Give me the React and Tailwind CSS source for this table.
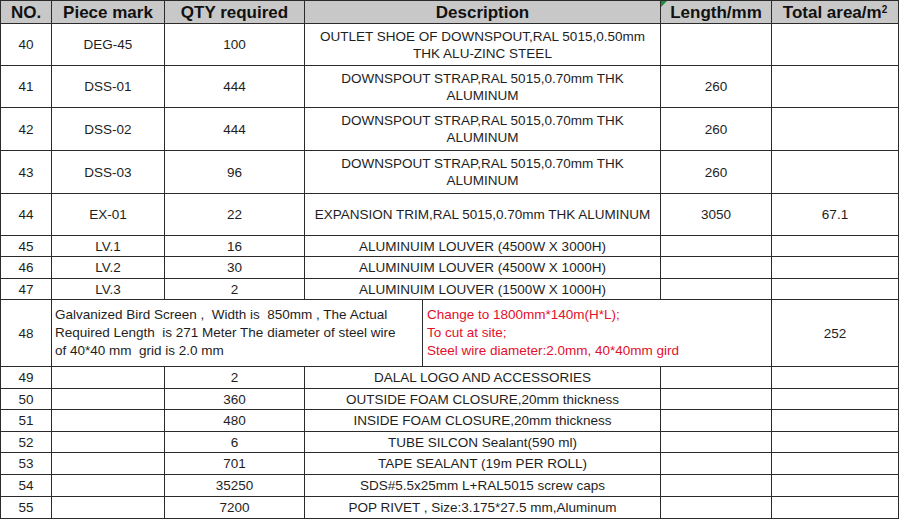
import React from "react";

const rows = [
  { no: "40", mark: "DEG-45", qty: "100", desc: ["OUTLET SHOE OF DOWNSPOUT,RAL 5015,0.50mm", "THK ALU-ZINC STEEL"], len: "", area: "", h: "h-[42px]" },
  { no: "41", mark: "DSS-01", qty: "444", desc: ["DOWNSPOUT STRAP,RAL 5015,0.70mm THK", "ALUMINUM"], len: "260", area: "", h: "h-[42px]" },
  { no: "42", mark: "DSS-02", qty: "444", desc: ["DOWNSPOUT STRAP,RAL 5015,0.70mm THK", "ALUMINUM"], len: "260", area: "", h: "h-[43px]" },
  { no: "43", mark: "DSS-03", qty: "96", desc: ["DOWNSPOUT STRAP,RAL 5015,0.70mm THK", "ALUMINUM"], len: "260", area: "", h: "h-[43px]" },
  { no: "44", mark: "EX-01", qty: "22", desc: ["EXPANSION TRIM,RAL 5015,0.70mm THK ALUMINUM"], len: "3050", area: "67.1", h: "h-[42px]" },
  { no: "45", mark: "LV.1", qty: "16", desc: ["ALUMINUIM LOUVER (4500W X 3000H)"], len: "", area: "", h: "h-[21px]" },
  { no: "46", mark: "LV.2", qty: "30", desc: ["ALUMINUIM LOUVER (4500W X 1000H)"], len: "", area: "", h: "h-[22px]" },
  { no: "47", mark: "LV.3", qty: "2", desc: ["ALUMINUIM LOUVER (1500W X 1000H)"], len: "", area: "", h: "h-[21px]" },
];

const tail = [
  { no: "49", qty: "2", desc: "DALAL LOGO AND ACCESSORIES", h: "h-[22px]" },
  { no: "50", qty: "360", desc: "OUTSIDE FOAM CLOSURE,20mm thickness", h: "h-[21px]" },
  { no: "51", qty: "480", desc: "INSIDE FOAM CLOSURE,20mm thickness", h: "h-[22px]" },
  { no: "52", qty: "6", desc: "TUBE SILCON Sealant(590 ml)", h: "h-[21px]" },
  { no: "53", qty: "701", desc: "TAPE SEALANT (19m PER ROLL)", h: "h-[22px]" },
  { no: "54", qty: "35250", desc: "SDS#5.5x25mm L+RAL5015 screw caps", h: "h-[22px]" },
  { no: "55", qty: "7200", desc: "POP RIVET , Size:3.175*27.5 mm,Aluminum", h: "h-[22px]" },
];

const cell = "border border-[#2b2b2b] text-center align-middle p-0";

const App = () => {
  return (
    <div className="w-[900px] h-[520px] bg-white" style={{ fontFamily: '"Liberation Sans", Arial, sans-serif' }}>
      <table className="table-fixed border-collapse w-[898px] text-[13.5px] leading-[17px] text-[#1e1e1e]">
        <colgroup>
          <col className="w-[51px]" />
          <col className="w-[113px]" />
          <col className="w-[140px]" />
          <col className="w-[118px]" />
          <col className="w-[238px]" />
          <col className="w-[111px]" />
          <col className="w-[127px]" />
        </colgroup>
        <thead>
          <tr className="h-[23px] bg-[#c8c8c8] text-[17px] font-bold text-[#111]">
            <th className={cell}>NO.</th>
            <th className={cell}>Piece mark</th>
            <th className={cell}>QTY required</th>
            <th className={cell} colSpan={2}>Description</th>
            <th className={`${cell} relative`}>
              Length/mm
              <span className="absolute left-0 top-0 w-0 h-0 border-t-[6px] border-r-[6px] border-t-[#1f8a3a] border-r-transparent" />
            </th>
            <th className={cell}>
              Total area/m<sup className="text-[10px]">2</sup>
            </th>
          </tr>
        </thead>
        <tbody>
          {rows.map((r) => (
            <tr key={r.no} className={r.h}>
              <td className={cell}>{r.no}</td>
              <td className={cell}>{r.mark}</td>
              <td className={cell}>{r.qty}</td>
              <td className={cell} colSpan={2}>
                {r.desc.map((line, i) => (
                  <div key={i}>{line}</div>
                ))}
              </td>
              <td className={cell}>{r.len}</td>
              <td className={cell}>{r.area}</td>
            </tr>
          ))}
          <tr className="h-[67px]">
            <td className={cell}>48</td>
            <td className={`${cell} text-left pl-[3px] leading-[18px] whitespace-pre`} colSpan={3}>
              <div>Galvanized Bird Screen ,  Width is  850mm , The Actual</div>
              <div>Required Length  is 271 Meter The diameter of steel wire</div>
              <div>of 40*40 mm  grid is 2.0 mm</div>
            </td>
            <td className={`${cell} text-left pl-[4px] leading-[18px] text-[#e3102c]`} colSpan={2}>
              <div>Change to 1800mm*140m(H*L);</div>
              <div>To cut at site;</div>
              <div>Steel wire diameter:2.0mm, 40*40mm gird</div>
            </td>
            <td className={cell}>252</td>
          </tr>
          {tail.map((r) => (
            <tr key={r.no} className={r.h}>
              <td className={cell}>{r.no}</td>
              <td className={cell}></td>
              <td className={cell}>{r.qty}</td>
              <td className={cell} colSpan={2}>{r.desc}</td>
              <td className={cell}></td>
              <td className={cell}></td>
            </tr>
          ))}
        </tbody>
      </table>
    </div>
  );
};

export default App;
